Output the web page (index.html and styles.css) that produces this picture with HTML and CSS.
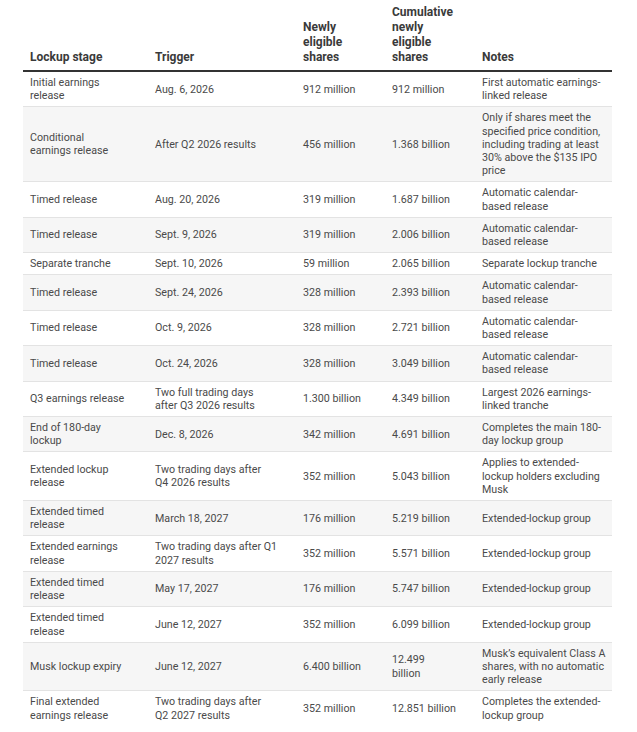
FILE: index.html
```html
<!DOCTYPE html>
<html lang="en">
<head>
<meta charset="utf-8">
<title>Lockup schedule</title>
<link rel="stylesheet" href="styles.css">
</head>
<body>
<table class="lockup">
  <colgroup>
    <col class="c1"><col class="c2"><col class="c3"><col class="c4"><col class="c5">
  </colgroup>
  <thead>
    <tr>
      <th>Lockup stage</th>
      <th>Trigger</th>
      <th>Newly eligible shares</th>
      <th>Cumulative newly eligible shares</th>
      <th>Notes</th>
    </tr>
  </thead>
  <tbody>
    <tr><td>Initial earnings release</td><td>Aug. 6, 2026</td><td>912 million</td><td>912 million</td><td>First automatic earnings-linked release</td></tr>
    <tr><td>Conditional earnings release</td><td>After Q2 2026 results</td><td>456 million</td><td>1.368 billion</td><td>Only if shares meet the specified price condition, including trading at least 30% above the $135 IPO price</td></tr>
    <tr><td>Timed release</td><td>Aug. 20, 2026</td><td>319 million</td><td>1.687 billion</td><td>Automatic calendar-<br>based release</td></tr>
    <tr><td>Timed release</td><td>Sept. 9, 2026</td><td>319 million</td><td>2.006 billion</td><td>Automatic calendar-<br>based release</td></tr>
    <tr><td>Separate tranche</td><td>Sept. 10, 2026</td><td>59 million</td><td>2.065 billion</td><td>Separate lockup tranche</td></tr>
    <tr><td>Timed release</td><td>Sept. 24, 2026</td><td>328 million</td><td>2.393 billion</td><td>Automatic calendar-<br>based release</td></tr>
    <tr><td>Timed release</td><td>Oct. 9, 2026</td><td>328 million</td><td>2.721 billion</td><td>Automatic calendar-<br>based release</td></tr>
    <tr><td>Timed release</td><td>Oct. 24, 2026</td><td>328 million</td><td>3.049 billion</td><td>Automatic calendar-<br>based release</td></tr>
    <tr><td>Q3 earnings release</td><td>Two full trading days<br>after Q3 2026 results</td><td>1.300 billion</td><td>4.349 billion</td><td>Largest 2026 earnings-linked tranche</td></tr>
    <tr><td>End of 180-day lockup</td><td>Dec. 8, 2026</td><td>342 million</td><td>4.691 billion</td><td>Completes the main 180-day lockup group</td></tr>
    <tr><td>Extended lockup release</td><td>Two trading days after<br>Q4 2026 results</td><td>352 million</td><td>5.043 billion</td><td>Applies to extended-lockup holders excluding Musk</td></tr>
    <tr><td>Extended timed release</td><td>March 18, 2027</td><td>176 million</td><td>5.219 billion</td><td>Extended-lockup group</td></tr>
    <tr><td>Extended earnings release</td><td>Two trading days after Q1 2027 results</td><td>352 million</td><td>5.571 billion</td><td>Extended-lockup group</td></tr>
    <tr><td>Extended timed release</td><td>May 17, 2027</td><td>176 million</td><td>5.747 billion</td><td>Extended-lockup group</td></tr>
    <tr><td>Extended timed release</td><td>June 12, 2027</td><td>352 million</td><td>6.099 billion</td><td>Extended-lockup group</td></tr>
    <tr><td>Musk lockup expiry</td><td>June 12, 2027</td><td>6.400 billion</td><td>12.499<br>billion</td><td>Musk’s equivalent Class A shares, with no automatic early release</td></tr>
    <tr><td>Final extended earnings release</td><td>Two trading days after<br>Q2 2027 results</td><td>352 million</td><td>12.851 billion</td><td>Completes the extended-lockup group</td></tr>
  </tbody>
</table>
</body>
</html>
```
FILE: styles.css
```css
html, body {
  margin: 0;
  padding: 0;
  background: #ffffff;
}
body {
  padding: 0 25px 0 23px;
  font-family: Roboto, "Liberation Sans", sans-serif;
}
.lockup {
  width: 589px;
  border-collapse: collapse;
  table-layout: fixed;
  font-size: 10.7px;
  color: #4a4a4a;
}
.c1 { width: 125px; }
.c2 { width: 148px; }
.c3 { width: 89px; }
.c4 { width: 90px; }
.c5 { width: 137px; }
.lockup th {
  text-align: left;
  vertical-align: bottom;
  font-weight: 700;
  font-size: 12px;
  line-height: 15px;
  color: #3a3a3a;
  padding: 5px 21px 5px 7px;
  border-bottom: 2px solid #333333;
}
.lockup td {
  vertical-align: middle;
  line-height: 13.2px;
  padding: 4px 21px 4px 7px;
  border-bottom: 1px solid #e3e3e3;
}
.lockup td:nth-child(2),
.lockup td:nth-child(4) {
  padding-right: 16px;
}
.lockup th:last-child {
  padding-right: 8px;
}
.lockup td:last-child {
  padding-right: 3px;
}
.lockup tbody tr:nth-child(even) td {
  background: #f6f6f6;
}
.lockup tbody tr:last-child td {
  border-bottom: none;
}
```
